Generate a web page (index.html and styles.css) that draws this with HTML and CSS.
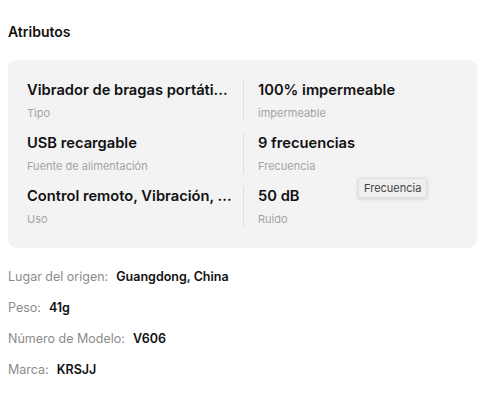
FILE: index.html
```html
<!DOCTYPE html>
<html lang="es">
<head>
    <meta charset="UTF-8">
    <meta name="viewport" content="width=device-width, initial-scale=1.0">
    <title>Atributos</title>
    <link rel="stylesheet" href="styles.css">
</head>
<body>
<div class="container">
    <h3 class="title">Atributos</h3>
    <div class="attr-box">
        <div class="attr-grid">
            <div class="attr">
                <div class="attr-value">Vibrador de bragas portáti...</div>
                <div class="attr-label">Tipo</div>
            </div>
            <div class="attr attr-right">
                <div class="attr-value">100% impermeable</div>
                <div class="attr-label">impermeable</div>
            </div>
            <div class="attr">
                <div class="attr-value">USB recargable</div>
                <div class="attr-label">Fuente de alimentación</div>
            </div>
            <div class="attr attr-right">
                <div class="attr-value">9 frecuencias</div>
                <div class="attr-label">Frecuencia</div>
            </div>
            <div class="attr">
                <div class="attr-value">Control remoto, Vibración, ...</div>
                <div class="attr-label">Uso</div>
            </div>
            <div class="attr attr-right">
                <div class="attr-value">50 dB</div>
                <div class="attr-label">Ruido</div>
            </div>
        </div>
        <div class="tooltip">Frecuencia</div>
    </div>

    <div class="props">
        <div class="prop"><span class="prop-label">Lugar del origen:</span><span class="prop-value">Guangdong, China</span></div>
        <div class="prop"><span class="prop-label">Peso:</span><span class="prop-value">41g</span></div>
        <div class="prop"><span class="prop-label">Número de Modelo:</span><span class="prop-value">V606</span></div>
        <div class="prop"><span class="prop-label">Marca:</span><span class="prop-value">KRSJJ</span></div>
    </div>
</div>
</body>
</html>
```

FILE: styles.css
```css
body {
    margin: 0;
    font-family: Inter, "Noto Sans", Arial, sans-serif;
    background-color: #fff;
    color: #111;
}
.container {
    width: 469px;
    padding: 0 8px;
}
.title {
    margin: 0;
    padding-top: 23px;
    font-size: 14px;
    font-weight: 600;
    line-height: 18px;
}
.attr-box {
    position: relative;
    margin-top: 19px;
    background: #f3f3f3;
    border-radius: 9px;
    padding: 20px 20px 21px 19px;
}
.attr-grid {
    display: grid;
    grid-template-columns: 216px 1fr;
    row-gap: 12px;
}
.attr-right {
    border-left: 1px solid #e0e0e0;
    padding-left: 14px;
}
.attr-value {
    font-size: 14.7px;
    font-weight: 600;
    line-height: 20px;
    white-space: nowrap;
}
.attr-label {
    margin-top: 5px;
    font-size: 11px;
    line-height: 16px;
    color: #a3a3a3;
}
.tooltip {
    position: absolute;
    left: 350px;
    top: 118px;
    padding: 0 5px;
    height: 18px;
    line-height: 18px;
    font-size: 11px;
    color: #444;
    background: #efefef;
    border: 1px solid #dedede;
    border-radius: 2px;
    box-shadow: 0 1px 4px rgba(0, 0, 0, 0.15);
}
.props {
    padding-top: 20px;
}
.prop {
    font-size: 12.5px;
    line-height: 17px;
    margin-bottom: 14px;
}
.prop-label {
    color: #8c8c8c;
    margin-right: 8px;
}
.prop-value {
    font-weight: 600;
    color: #111;
}
```
